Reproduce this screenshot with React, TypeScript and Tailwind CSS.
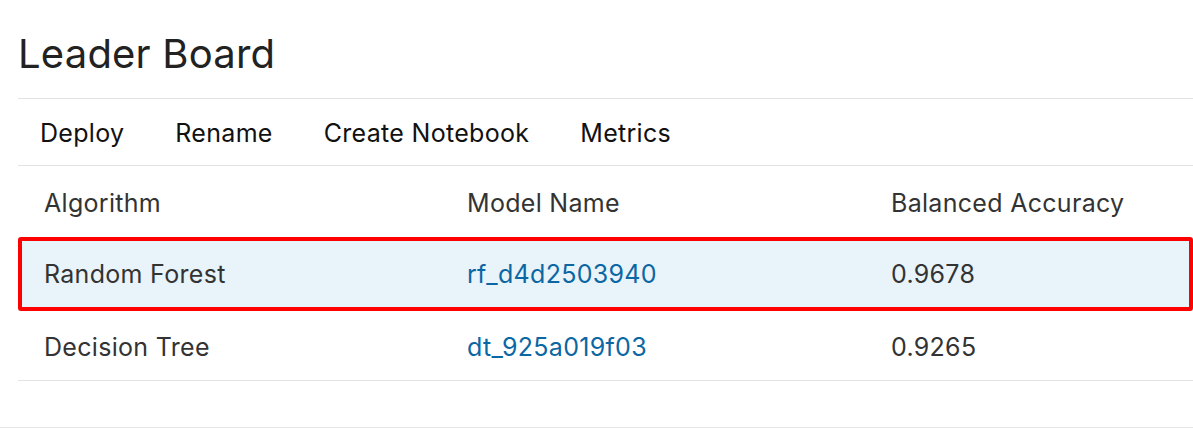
const actions = ['Deploy', 'Rename', 'Create Notebook', 'Metrics']

interface ModelRow {
  algorithm: string
  modelName: string
  accuracy: string
  selected?: boolean
}

const rows: ModelRow[] = [
  { algorithm: 'Random Forest', modelName: 'rf_d4d2503940', accuracy: '0.9678', selected: true },
  { algorithm: 'Decision Tree', modelName: 'dt_925a019f03', accuracy: '0.9265' },
]

export default function App() {
  return (
    <div className="h-[429px] w-[1193px] overflow-hidden bg-white font-['Inter',sans-serif] text-[#333]">
      <div className="pl-[18px]">
        <h1 className="pt-[27px] pb-[17px] text-[40px] leading-[54px] font-normal tracking-[0.2px] text-[#222]">Leader Board</h1>
        <div className="flex h-[68px] items-center gap-[51px] border-y border-[#e3e3e3] pt-[3px] pl-[22px] text-[25px] tracking-[0.3px] text-[#111]">
          {actions.map(a => (
            <button key={a} className="cursor-pointer">{a}</button>
          ))}
        </div>
        <div className="grid h-[71px] grid-cols-[423px_424px_1fr] items-center pt-[5px] pl-[26px] text-[25px] tracking-[0.3px]">
          <div>Algorithm</div>
          <div>Model Name</div>
          <div>Balanced Accuracy</div>
        </div>
        {rows.map(r => (
          <div
            key={r.modelName}
            className={
              r.selected
                ? 'grid h-[74px] grid-cols-[423px_424px_1fr] items-center rounded-[3px] border-4 border-[#ff0000] bg-[#e9f3fa] pt-[2px] pl-[22px] text-[25px] tracking-[0.3px]'
                : 'grid h-[70px] grid-cols-[423px_424px_1fr] items-center border-b border-[#e3e3e3] pt-[4px] pl-[26px] text-[25px] tracking-[0.3px]'
            }
          >
            <div>{r.algorithm}</div>
            <div className="text-[#0b67a3]">{r.modelName}</div>
            <div>{r.accuracy}</div>
          </div>
        ))}
      </div>
      <div className="mt-[46px] border-b border-[#e8e8e8]" />
    </div>
  )
}
